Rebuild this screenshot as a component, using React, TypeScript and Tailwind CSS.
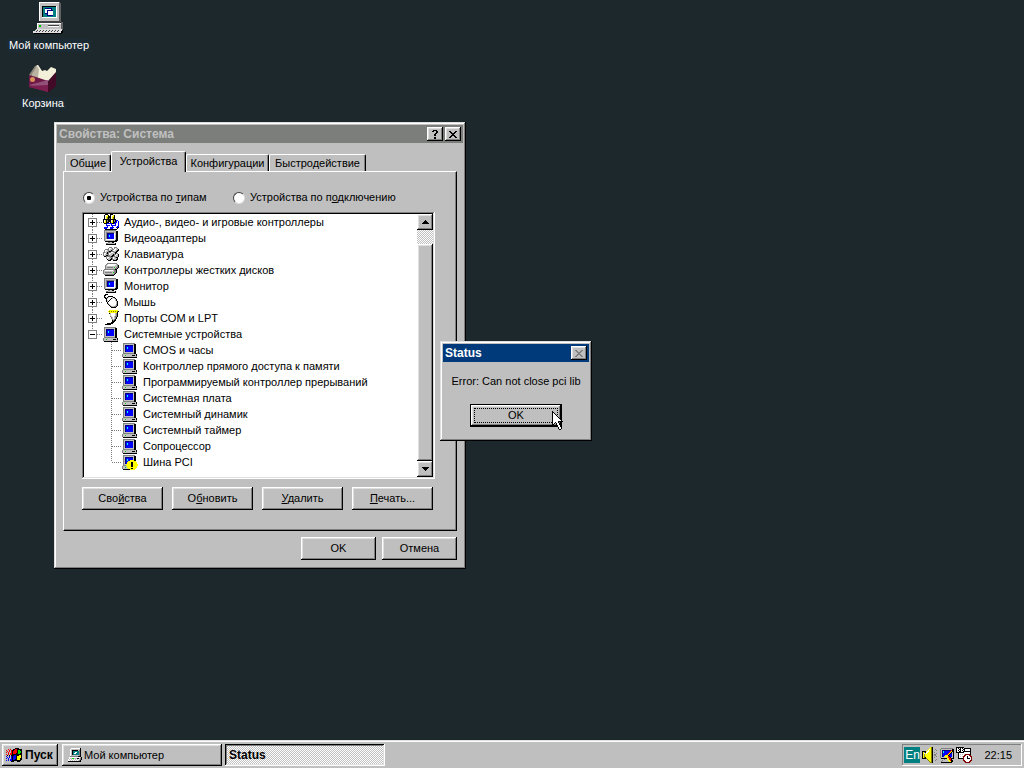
import React, { useState } from "react";

const COLORS: Record<string, string> = {
  k: "#000000",
  g: "#808080",
  c: "#c0c0c0",
  w: "#ffffff",
  b: "#0000ff",
  n: "#000080",
  t: "#008080",
  a: "#00ffff",
  l: "#00e000",
  y: "#ffff00",
  r: "#ff0000",
  m: "#800000",
  o: "#808000",
};

// one character per pixel, "." is transparent
const Pixels: React.FC<{ rows: string[]; className?: string }> = ({ rows, className }) => {
  const width = Math.max(...rows.map((r) => r.length));
  return (
    <svg
      width={width}
      height={rows.length}
      viewBox={`0 0 ${width} ${rows.length}`}
      shapeRendering="crispEdges"
      aria-hidden="true"
      className={`shrink-0 ${className ?? ""}`}
    >
      {rows.flatMap((row, y) =>
        [...row].map((ch, x) =>
          ch === "." ? null : <rect key={`${x}-${y}`} x={x} y={y} width="1" height="1" fill={COLORS[ch]} />
        )
      )}
    </svg>
  );
};

const COMPUTER = [
  "................",
  ".gggggggggggg...",
  ".gcccccccccckk..",
  ".gcnnnnnnnnckk..",
  ".gcnbbbbbbbckk..",
  ".gcnbabbbbbckk..",
  ".gcnbabbbbbckk..",
  ".gcnbbbbbbbckk..",
  ".gcnbbbbbbbckk..",
  ".gcnbbbbbbbckk..",
  ".gcccccccccckk..",
  ".gggggggggggkk..",
  "gccccccccccccck.",
  "gcclcccccckkkck.",
  "gcccccccccccccg.",
  ".kkkkkkkkkkkkkk.",
];

const WARNING = [
  "................",
  ".gggggggggggg...",
  ".gcccccccccckk..",
  ".gcnnnnnnnnckk..",
  ".gcnbbbbbbbckk..",
  ".gcnbabbbbbckk..",
  ".gcnbabbyyyykk..",
  ".gcnbbyyyyyyyy..",
  ".gcnbyyyykkyyyy.",
  ".gcnbyyyykkyyyy.",
  ".gccyyyyykkyyyyy",
  ".gggyyyyykkyyyyy",
  "gccccyyyykkyyyy.",
  "gcclcyyyyyyyyyy.",
  "gcccccyyykkyyy..",
  ".kkkkkkkyyyyy...",
];

const MONITOR = [
  ".gggggggggggg...",
  ".gccccccccccckk.",
  ".gcggggggggcckk.",
  ".gcgnnnnnnnwckk.",
  ".gcgnbbbbbbwckk.",
  ".gcgnbabbbbwckk.",
  ".gcgnbabbbbwckk.",
  ".gcgnbbbbbbwckk.",
  ".gcgnbbbbbbwckk.",
  ".gcwwwwwwwwwckk.",
  ".gcccccccccckkk.",
  "..kkkkkkkkkkkk..",
  ".....ggcckk.....",
  "...ggccccccck...",
  "...kkkkkkkkkk...",
  "................",
];

const AUDIO = [
  "..kkk..kkk......",
  ".kwwyk.kwwyk....",
  ".kwyykkkwyyk....",
  ".kwyokkkwyok....",
  ".kwyokgkwyok....",
  "kkkkkkkkkkkkk...",
  "kwykgkkkwykgkbb.",
  "kwykgkkkwykgkbwb",
  "kyykkk.kyykkbbwb",
  ".kkkbbbbbkkbbwwb",
  "...bwwwwbwwwbwwb",
  "...bbbbwbbbbbwwb",
  "..wwbwwwwbwwwwbb",
  ".bbbbwwbbbbwwbbk",
  ".bbbwwwbbbwwwwk.",
  "..kkkkkkkkkkkk..",
];

const KEYBOARD = [
  "................",
  "......ggg..ggg..",
  ".....gwwcg.gwcg.",
  "..ggggwccggwwcck",
  ".gwwcgcckgwwcckk",
  ".gwccgkkgggcckk.",
  "ggcckgggwwcgkk..",
  "gwwgkgwwcccckgg.",
  "gwccggwccckggwck",
  "gcckkggcckkgwcck",
  ".kkgggggkkggccck",
  "...gwwcgggwcgkk.",
  "...gwccckgwccck.",
  "....kcckkggcckk.",
  ".....kkk..kkkk..",
  "................",
];

const DISKS = [
  "................",
  "....gggggggggg..",
  "...gcwwwwwwwwcg.",
  "..gcwwwwwwwwccgk",
  "..gcccccccccccgk",
  "..gcggggggclcggk",
  "..gcccccccccggk.",
  ".gggggggggggkk..",
  "gcwwwwwwwwcggk..",
  "gccccccccccggk..",
  "gcgggggggclggk..",
  "gccccccccccgk...",
  ".ggggggggggk....",
  "..kkkkkkkkk.....",
  "................",
  "................",
];

const MOUSE = [
  "..kkk...........",
  ".kk.............",
  ".k...kkkkk......",
  ".kk.kcwwwckk....",
  "..kkcwwwkcwck...",
  "...kwwwkwwwwck..",
  "...kcwkwwwwwck..",
  "...kckwwwwwwwck.",
  "....kwwwwwwwwck.",
  "....kcwwwwwwwck.",
  ".....kcwwwwwwgk.",
  "......kcwwwwcgk.",
  ".......kgccggk..",
  "........kkkkk...",
  "................",
  "................",
];

const PORT = [
  "......yyyyyyyyy.",
  ".....yoyoyoyoyok",
  "......yyyyyyyyk.",
  "......kcwwwwcgk.",
  ".......cwwwwcgk.",
  ".......cwwwwcgk.",
  ".......gcwwcggk.",
  "........gcwcgk..",
  "........gcwcgk..",
  ".........gcgk...",
  ".........kgkk...",
  ".........kkk....",
  "........kkk.....",
  "....kkkkkk......",
  "..kkkkkk........",
  "................",
];

const FLAG = [
  ".........kkkk...",
  "..r.r..kkrrkkkkk",
  "r..r.rkkrrrkllkk",
  ".r.r.rkrrrrklllk",
  "r.r..rkrrrrklllk",
  "..r.rrkrrrkkllkk",
  "r.r.rrkkkkkkkkkk",
  ".k.k.kkkbbkkkyyk",
  "b..b.bkbbbkyyyyk",
  ".b.b.bkbbbkyyyyk",
  "b.b..bkbbbkyyykk",
  "..b.bbkbbkkyyykk",
  "b.b.bbkkkkkkkkk.",
  ".....kkk...kkk..",
];

const SMALL_PC = [
  "...wwwwwwwwwk.",
  "..wccccccccck.",
  "..wckkkkkkcgk.",
  "..wckttttttgk.",
  "..wckttwwttgk.",
  "..wcktwwtttgk.",
  "..wckttttttgk.",
  "..wccccccccgk.",
  "..ggggggggkkk.",
  ".wwwwwwwwwwwck",
  ".wccllccckkcgk",
  "wcwcwcwcwcwcgk",
  "wwcwcwcwcwcgk.",
  "kkkkkkkkkkkkk.",
];

const SPEAKER = [
  "........yok.....",
  ".......yyok.....",
  "......ywyok..g..",
  ".....ywyyok...g.",
  "kkkkywwyyok.....",
  "kygkwwyyyok.g...",
  "kywywyyyyok...g.",
  "kygyyyyyyok.gg..",
  "kygyyyyyyok.gg..",
  "kyoyyyyyyok...g.",
  "kyokyyyyyok.g...",
  "kkkkoyyyyok.....",
  ".....oyyyok...g.",
  "......oyyok..g..",
  ".......oyok.....",
  "........ook.....",
];

const TRAY_MONITOR = [
  "..gggggggggggg..",
  ".gccccccccccckk.",
  ".gcnnnnnnnnnrkk.",
  ".gcnabbbbbbrykk.",
  ".gcnabbbbbrykck.",
  ".gcnbbbbbrykbck.",
  ".gcnbbbbrykbbck.",
  ".gcnbbyyykbbbck.",
  ".gcnbyyyyrkbbck.",
  ".gcccccyyrrkcck.",
  "..kkkkkkyyrrkkk.",
  ".....gccyyrrk...",
  "...gcccccyyrkk..",
  "..gcccccccyykk..",
  "..kkkkkkkkkkk...",
];

const SCHEDULE = [
  "kkkkkkkk........",
  "kwkwkwkwkkkkkkk.",
  "kwwkkwwkkwwwwwk.",
  "kwkwkwkwkwwwwwk.",
  "kwwkkwwkkkkkkkk.",
  "kkkkkkkkwwwwwwk.",
  "..kwwwwwwwwwwwk.",
  "..kwcwcwcmmmmmk.",
  "..kwwwwwmmwwwmm.",
  "..kwcwcmmwwkwwmm",
  "..kwwwwmwwwkwwwm",
  "..kkkkkmwwwkkkwm",
  ".......mwwwwwwwm",
  ".......mmwwwwwmm",
  "........mmwwwmm.",
  ".........mmmmm..",
];

const CURSOR = [
  "k...........",
  "kk..........",
  "kwk.........",
  "kwwk........",
  "kwwwk.......",
  "kwwwwk......",
  "kwwwwwk.....",
  "kwwwwwwk....",
  "kwwwwwwwk...",
  "kwwwwwwwwk..",
  "kwwwwwkkkkk.",
  "kwwkwwk.....",
  "kwk.kwwk....",
  "kk..kwwk....",
  "k....kwwk...",
  ".....kwwk...",
  "......kwwk..",
  "......kwwk..",
  ".......kk...",
];

const CLOSE = ["kk....kk", ".kk..kk.", "..kkkk..", "...kk...", "..kkkk..", ".kk..kk.", "kk....kk"];
const CLOSE_OFF = CLOSE.map((r) => r.replace(/k/g, "g"));
const HELP = [".kkkk.", "kk..kk", "....kk", "...kk.", "..kk..", "..kk..", "......", "..kk..", "..kk.."];
const ARROW_UP = ["...k...", "..kkk..", ".kkkkk.", "kkkkkkk"];
const ARROW_DOWN = [...ARROW_UP].reverse();

const RAISED =
  "bg-[#bfbfbf] shadow-[inset_-1px_-1px_#000,inset_1px_1px_#fff,inset_-2px_-2px_#808080,inset_2px_2px_#dfdfdf]";
const FRAME =
  "bg-[#bfbfbf] shadow-[inset_-1px_-1px_#000,inset_1px_1px_#dfdfdf,inset_-2px_-2px_#808080,inset_2px_2px_#fff]";
const SUNKEN =
  "shadow-[inset_-1px_-1px_#fff,inset_1px_1px_#808080,inset_-2px_-2px_#dfdfdf,inset_2px_2px_#000]";
const CHECKER = "bg-[repeating-conic-gradient(#fff_0_25%,#c0c0c0_0_50%)] bg-[length:2px_2px]";
const DOTS_X = "bg-[linear-gradient(90deg,#808080_50%,transparent_50%)] bg-[length:2px_1px]";
const DOTS_Y = "bg-[linear-gradient(#808080_50%,transparent_50%)] bg-[length:1px_2px]";

const CATEGORIES = [
  { name: "Аудио-, видео- и игровые контроллеры", icon: AUDIO },
  { name: "Видеоадаптеры", icon: MONITOR },
  { name: "Клавиатура", icon: KEYBOARD },
  { name: "Контроллеры жестких дисков", icon: DISKS },
  { name: "Монитор", icon: MONITOR },
  { name: "Мышь", icon: MOUSE },
  { name: "Порты COM и LPT", icon: PORT },
  { name: "Системные устройства", icon: COMPUTER },
];

const DEVICES = [
  "CMOS и часы",
  "Контроллер прямого доступа к памяти",
  "Программируемый контроллер прерываний",
  "Системная плата",
  "Системный динамик",
  "Системный таймер",
  "Сопроцессор",
  "Шина PCI",
];

const TABS = [
  { name: "Общие", width: "w-[46px]" },
  { name: "Устройства", width: "w-[75px]" },
  { name: "Конфигурации", width: "w-[83px]" },
  { name: "Быстродействие", width: "w-[97px]" },
];

const PushButton: React.FC<{ className: string; children: React.ReactNode }> = ({ className, children }) => (
  <button type="button" className={`h-[23px] pb-px ${RAISED} ${className}`}>
    {children}
  </button>
);

const Tree: React.FC = () => {
  const [open, setOpen] = useState(true);
  const last = CATEGORIES.length - 1;

  return (
    <ul className="min-w-0 flex-1 pb-[7px]">
      {CATEGORIES.map((c, i) => (
        <li key={c.name} className="flex h-4 items-center pl-1">
          <div className="flex h-4 w-[9px] flex-col items-center">
            <span className={`h-1 w-px ${DOTS_Y}`} />
            <button
              type="button"
              aria-label={c.name}
              aria-expanded={i === last && open}
              onClick={() => i === last && setOpen(!open)}
              className="grid size-[9px] place-items-center border border-[#808080] bg-white"
            >
              <Pixels
                rows={
                  i === last && open
                    ? [".....", ".....", "kkkkk", ".....", "....."]
                    : ["..k..", "..k..", "kkkkk", "..k..", "..k.."]
                }
              />
            </button>
            {i < last && <span className={`h-[3px] w-px ${DOTS_Y}`} />}
          </div>
          <span className={`h-px w-1.5 ${DOTS_X}`} />
          <Pixels rows={c.icon} />
          <span className="ml-[5px] whitespace-nowrap">{c.name}</span>
        </li>
      ))}
      {open &&
        DEVICES.map((d, i) => (
          <li key={d} className="flex h-4 items-center pl-[27px]">
            <span className={`w-px self-start ${DOTS_Y} ${i === DEVICES.length - 1 ? "h-2" : "h-4"}`} />
            <span className={`h-px w-2.5 ${DOTS_X}`} />
            <Pixels rows={i === DEVICES.length - 1 ? WARNING : COMPUTER} />
            <span className="ml-[5px] whitespace-nowrap">{d}</span>
          </li>
        ))}
    </ul>
  );
};

const SystemWindow: React.FC = () => {
  const [tab, setTab] = useState(1);
  const [mode, setMode] = useState("type");
  const radio =
    "size-3 appearance-none rounded-full border border-t-[#404040] border-r-[#dfdfdf] border-b-[#dfdfdf] border-l-[#404040] bg-white checked:bg-[radial-gradient(circle,#000_2px,#fff_2.5px)]";

  return (
    <section aria-label="Свойства: Система" className={`absolute top-[122px] left-[54px] w-[412px] p-[3px] ${FRAME}`}>
      <header className="flex h-[18px] items-center bg-[#7b7e7b] px-0.5 font-bold text-[#c0c0c0]">
        <h1 className="flex-1 text-[12px]">Свойства: Система</h1>
        <button type="button" aria-label="Справка" className={`grid h-3.5 w-4 place-items-center ${RAISED}`}>
          <Pixels rows={HELP} />
        </button>
        <button type="button" aria-label="Закрыть" className={`ml-0.5 grid h-3.5 w-4 place-items-center ${RAISED}`}>
          <Pixels rows={CLOSE} />
        </button>
      </header>

      <div className="px-1.5 pt-2 pb-1.5">
        <div role="tablist" className="flex items-end pl-0.5">
          {TABS.map((t, i) => (
            <button
              key={t.name}
              type="button"
              role="tab"
              aria-selected={i === tab}
              onClick={() => setTab(i)}
              className={`rounded-t-[2px] border-t border-r border-l border-t-white border-r-black border-l-white bg-[#bfbfbf] whitespace-nowrap shadow-[inset_-1px_0_#808080] ${
                t.width
              } ${i === tab ? "relative -mb-px h-[21px] pb-0.5" : "h-[17px]"}`}
            >
              {t.name}
            </button>
          ))}
        </div>

        <div
          role="tabpanel"
          className="border border-t-white border-r-black border-b-black border-l-white pt-[19px] pr-[21px] pb-5 pl-[18px] shadow-[inset_-1px_-1px_#808080]"
        >
          <div className="flex items-center pl-px">
            <label className="flex w-[150px] items-center gap-[5px]">
              <input
                type="radio"
                name="mode"
                checked={mode === "type"}
                onChange={() => setMode("type")}
                className={radio}
              />
              <span>
                Устройства по <u>т</u>ипам
              </span>
            </label>
            <label className="flex items-center gap-[5px]">
              <input
                type="radio"
                name="mode"
                checked={mode === "link"}
                onChange={() => setMode("link")}
                className={radio}
              />
              <span>
                Устройства по п<u>о</u>дключению
              </span>
            </label>
          </div>

          <div className={`mt-2 flex bg-white p-0.5 ${SUNKEN}`}>
            <Tree />
            <div className={`flex w-4 flex-col ${CHECKER}`}>
              <button type="button" aria-label="Вверх" className={`grid h-4 place-items-center ${RAISED}`}>
                <Pixels rows={ARROW_UP} />
              </button>
              <div className={`mt-3.5 flex-1 ${RAISED}`} />
              <button type="button" aria-label="Вниз" className={`grid h-4 place-items-center ${RAISED}`}>
                <Pixels rows={ARROW_DOWN} />
              </button>
            </div>
          </div>

          <div className="mt-2 flex gap-[9px]">
            <PushButton className="w-[81px]">
              Сво<u>й</u>ства
            </PushButton>
            <PushButton className="w-[81px]">
              О<u>б</u>новить
            </PushButton>
            <PushButton className="w-[81px]">
              <u>У</u>далить
            </PushButton>
            <PushButton className="w-[81px]">
              <u>П</u>ечать...
            </PushButton>
          </div>
        </div>

        <div className="mt-1.5 flex justify-end gap-1.5">
          <PushButton className="w-[75px]">OK</PushButton>
          <PushButton className="w-[75px]">Отмена</PushButton>
        </div>
      </div>
    </section>
  );
};

const StatusDialog: React.FC = () => (
  <section role="alertdialog" aria-label="Status" className={`absolute top-[341px] left-[440px] w-[152px] p-[3px] ${FRAME}`}>
    <header className="flex h-[18px] items-center bg-[#003a7b] px-0.5 font-bold text-white">
      <h2 className="flex-1 text-[12px]">Status</h2>
      <button type="button" aria-label="Close" className={`grid h-3.5 w-4 place-items-center ${RAISED}`}>
        <Pixels rows={CLOSE_OFF} />
      </button>
    </header>
    <div className="flex flex-col items-center pt-[13px] pb-[11px]">
      <p>Error: Can not close pci lib</p>
      <button type="button" className={`mt-4 h-[23px] w-[92px] border border-black p-[3px] ${RAISED}`}>
        <span className="flex h-full items-center justify-center border border-dotted border-black">OK</span>
      </button>
    </div>
  </section>
);

const DesktopComputer: React.FC = () => (
  <svg width="32" height="32" viewBox="0 0 32 32" shapeRendering="crispEdges" aria-hidden="true">
    <path d="M7 0h20v1h1v19H7z" fill="#808080" />
    <path d="M6 0h20v19H6z" fill="#c0c0c0" />
    <path d="M6 0h20v1H7v18H6z" fill="#fff" />
    <path d="M26 1h2v19h-2z" fill="#606060" />
    <path d="M9 4h15v12H9z" fill="#fff" />
    <path d="M9 4h14v11H9z" fill="#000" />
    <path d="M10 5h13v10H10z" fill="#008080" />
    <path d="M12 6h7v6h-7z" fill="#000080" />
    <path d="M12 7h6v4h-6z" fill="#fff" />
    <path d="M14 8h6v6h-6z" fill="#000080" />
    <path d="M15 9h5v4h-5z" fill="#fff" />
    <path d="M7 19h20v2H7z" fill="#404040" />
    <path d="M4 21h25v6H4z" fill="#c0c0c0" />
    <path d="M4 21h25v1H5v5H4z" fill="#fff" />
    <path d="M28 20h2v8h-2z" fill="#606060" />
    <path d="M6 23h2v2H6z" fill="#00c000" />
    <path d="M15 23h11v1H15z" fill="#404040" />
    <path d="M15 24h11v1H15z" fill="#fff" />
    <path d="M3 27h26v2h-1v2H0v-2h2z" fill="#dfdfdf" />
    <path d="M0 31h28v1H1z M28 29h1v-1h1v3h-1v1h-1z" fill="#000" />
    <path
      d="M4 28h1v1H4zm3 0h1v1H7zm3 0h1v1h-1zm3 0h1v1h-1zm3 0h1v1h-1zm3 0h1v1h-1zm3 0h1v1h-1zm3 0h1v1h-1zM3 29h1v1H3zm3 0h1v1H6zm3 0h1v1H9zm3 0h1v1h-1zm3 0h1v1h-1zm3 0h1v1h-1zm3 0h1v1h-1zm3 0h1v1h-1z"
      fill="#404040"
    />
  </svg>
);

const RecycleBin: React.FC = () => (
  <svg width="32" height="32" viewBox="0 0 32 32" aria-hidden="true">
    <path d="M2 12 8 3l3-1 4 6 3 8-16 0z" fill="#8f8a7c" />
    <path d="m10 2 1 0 4 6 3-1 2 1 4-4 5 2v6l-8 7-10-3-3-7z" fill="#f3f0da" />
    <path d="m5 11 5-8 2 3-1 9-6 0z" fill="#b9b4a2" />
    <path d="M2 12 9 14l12 4v11L2 24z" fill="#6d1846" />
    <path d="M21 18 29 9v14l-7 6h-1z" fill="#420a27" />
    <path d="m2 22 19-5v6L9 24z" fill="#935078" />
    <path d="m2 23 19-1v7L2 24z" fill="#7a1f4f" />
    <circle cx="5.500" cy="16.500" r="2.500" fill="#d9925a" />
  </svg>
);

const App: React.FC = () => (
  <main className="relative flex min-h-screen flex-col overflow-hidden bg-[#1c282c] font-['Liberation_Sans',Arial,sans-serif] text-[11px] leading-[13px] text-black">
    <nav aria-label="Рабочий стол" className="flex flex-1 flex-col items-start pt-0.5 text-white">
      <a href="#computer" className="ml-[7px] flex flex-col items-center gap-[5px]">
        <DesktopComputer />
        <span className="bg-[#1c2a33] px-0.5">Мой компьютер</span>
      </a>
      <a href="#bin" className="mt-[11px] ml-5 flex flex-col items-center gap-0.5">
        <RecycleBin />
        <span className="bg-[#1c2a33] px-0.5">Корзина</span>
      </a>
    </nav>

    <SystemWindow />
    <StatusDialog />
    <Pixels rows={CURSOR} className="absolute top-[411px] left-[552px]" />

    <footer className="flex h-7 items-center gap-[3px] bg-[#bfbfbf] px-0.5 pt-0.5 shadow-[inset_0_1px_#dfdfdf,inset_0_2px_#fff]">
      <button type="button" className={`flex h-[22px] w-14 items-center gap-[3px] pl-1 text-[12px] font-bold ${RAISED}`}>
        <Pixels rows={FLAG} />
        Пуск
      </button>
      <button type="button" className={`ml-px flex h-[22px] w-40 items-center gap-0.5 pl-1.5 ${RAISED}`}>
        <Pixels rows={SMALL_PC} />
        Мой компьютер
      </button>
      <button
        type="button"
        className={`h-[22px] w-40 pl-1 text-left text-[12px] font-bold shadow-[inset_-1px_-1px_#fff,inset_1px_1px_#000,inset_-2px_-2px_#dfdfdf,inset_2px_2px_#808080] ${CHECKER}`}
      >
        Status
      </button>
      <div className="ml-auto flex h-[22px] items-center pr-2.5 pl-0.5 shadow-[inset_-1px_-1px_#fff,inset_1px_1px_#808080]">
        <span className="grid size-4 place-items-center bg-[#008080] text-[12px] text-white">En</span>
        <Pixels rows={SPEAKER} className="ml-0.5" />
        <Pixels rows={TRAY_MONITOR} className="ml-px" />
        <Pixels rows={SCHEDULE} className="ml-px" />
        <time className="ml-3">22:15</time>
      </div>
    </footer>
  </main>
);

export default App;
